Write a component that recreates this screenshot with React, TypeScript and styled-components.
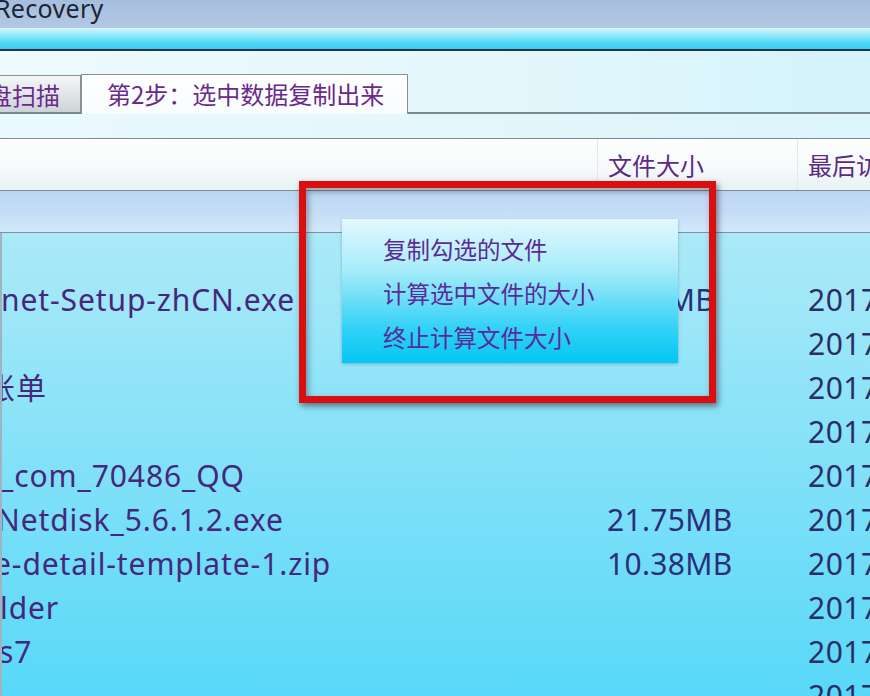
import styled, { createGlobalStyle } from "styled-components";

const GlobalStyle = createGlobalStyle`
  html, body {
    margin: 0;
    padding: 0;
    width: 870px;
    height: 696px;
    overflow: hidden;
    font-family: "Noto Sans", "Noto Sans CJK SC", sans-serif;
  }
`;

const Window = styled.div`
  position: relative;
  width: 870px;
  height: 696px;
  overflow: hidden;
  display: flex;
  flex-direction: column;
  background: linear-gradient(180deg, #c6eff9 0%, #a4e8f8 40%, #58d8f8 100%);
`;

const TitleBar = styled.div`
  height: 28px;
  flex: none;
  display: flex;
  align-items: flex-end;
  background: linear-gradient(180deg, #a6bedd 0%, #b2c8e4 100%);
  overflow: hidden;
`;

const Title = styled.span`
  margin-left: -5px;
  margin-bottom: 7px;
  font-size: 25px;
  line-height: 25px;
  letter-spacing: 0.3px;
  color: #1c2535;
  font-family: "Noto Sans", sans-serif;
`;

const Band = styled.div`
  height: 21px;
  flex: none;
  background: linear-gradient(180deg, #d8f6fc 0%, #9aeaf8 30%, #48d6f6 75%, #3fcaea 100%);
  border-bottom: 2px solid #26334a;
`;

const TabStrip = styled.div`
  height: 63px;
  flex: none;
  display: flex;
  align-items: flex-end;
  background: linear-gradient(90deg, #eefafd 0%, #e2f7fc 60%, #d4f3fb 100%);
  border-bottom: 2px solid #7c8890;
  box-sizing: border-box;
`;

const Tab = styled.div<{ $active?: boolean }>`
  height: ${(p) => (p.$active ? "40px" : "37px")};
  box-sizing: border-box;
  display: flex;
  align-items: center;
  padding: ${(p) => (p.$active ? "0 0 2px 25px" : "0")};
  width: ${(p) => (p.$active ? "327px" : "81px")};
  margin-bottom: ${(p) => (p.$active ? "-2px" : "0")};
  font-size: 24px;
  color: #6a2a8c;
  font-family: "Noto Sans CJK SC", sans-serif;
  border: 1px solid #8a9096;
  border-left: ${(p) => (p.$active ? "1px solid #8a9096" : "none")};
  border-bottom: none;
  background: ${(p) =>
    p.$active
      ? "linear-gradient(180deg, #ffffff 0%, #f7fcfd 100%)"
      : "linear-gradient(180deg, #f4f6f7 0%, #e2e6e9 50%, #ccd2d6 100%)"};
  overflow: hidden;
  white-space: nowrap;
`;

const TabText = styled.span<{ $shift?: number }>`
  margin-left: ${(p) => p.$shift ?? 0}px;
`;

const Gap = styled.div`
  height: 24px;
  flex: none;
  background: linear-gradient(90deg, #eaf9fd 0%, #dcf5fb 100%);
`;

const HeaderRow = styled.div`
  height: 53px;
  flex: none;
  box-sizing: border-box;
  display: grid;
  grid-template-columns: 597px 200px 1fr;
  border-top: 1px solid #7d8a90;
  border-bottom: 1px solid #7d8a90;
  background: linear-gradient(180deg, #fdfefe 0%, #f6fafb 55%, #e8f1f4 100%);
`;

const HeaderCell = styled.div<{ $divider?: boolean }>`
  display: flex;
  align-items: center;
  padding-left: 10px;
  font-size: 24px;
  color: #5c2a84;
  font-family: "Noto Sans CJK SC", sans-serif;
  border-left: ${(p) => (p.$divider ? "1px solid #e2e8ea" : "none")};
  white-space: nowrap;
  overflow: hidden;
`;

const GroupRow = styled.div`
  height: 42px;
  flex: none;
  box-sizing: border-box;
  border-bottom: 1px solid #7e94a4;
  background: linear-gradient(180deg, #bcd6f2 0%, #c4ddf6 50%, #d2e9fa 100%);
`;

const List = styled.div`
  display: flex;
  flex-direction: column;
  padding-top: 1px;
  border-left: 2px solid #9fb4c0;
`;

const Row = styled.div`
  height: 44px;
  flex: none;
  display: grid;
  grid-template-columns: 595px 200px 1fr;
  align-items: center;
  font-size: 30px;
  line-height: 44px;
  white-space: nowrap;
`;

const NameCell = styled.div<{ $shift?: number }>`
  overflow: hidden;
  color: #45287c;
  letter-spacing: 0.9px;
  font-family: "Noto Sans", "Noto Sans CJK SC", sans-serif;
  span {
    display: inline-block;
    margin-left: ${(p) => p.$shift ?? 0}px;
  }
`;

const SizeCell = styled.div`
  padding-left: 10px;
  letter-spacing: 0.3px;
  color: #2d2e78;
`;

const DateCell = styled.div`
  padding-left: 11px;
  letter-spacing: 0.5px;
  color: #2a2f66;
  overflow: hidden;
`;

const Highlight = styled.div`
  position: absolute;
  left: 299px;
  top: 181px;
  width: 417px;
  height: 222px;
  box-sizing: border-box;
  border: 7px solid #d9100f;
  box-shadow: 2px 3px 6px rgba(40, 20, 40, 0.55), inset 2px 3px 6px rgba(40, 40, 60, 0.45);
`;

const Menu = styled.div`
  position: absolute;
  left: 342px;
  top: 219px;
  width: 336px;
  height: 144px;
  box-sizing: border-box;
  padding: 8px 0 0 41px;
  display: flex;
  flex-direction: column;
  background: linear-gradient(180deg, #e2f8fd 0%, #a8ecfa 35%, #34d2f6 75%, #04c6f2 100%);
  box-shadow: 0 1px 3px rgba(40, 80, 110, 0.35);
`;

const MenuItem = styled.div`
  height: 44px;
  line-height: 44px;
  font-size: 23.5px;
  color: #5b2a98;
  font-family: "Noto Sans CJK SC", sans-serif;
  white-space: nowrap;
`;

type FileRow = {
  name: string;
  shift: number;
  size: string;
  date: string;
};

const rows: FileRow[] = [
  { name: "", shift: 0, size: "", date: "" },
  { name: "net-Setup-zhCN.exe", shift: -1, size: "3.24MB", date: "2017" },
  { name: "", shift: 0, size: "", date: "2017" },
  { name: "账单", shift: -17, size: "", date: "2017" },
  { name: "", shift: 0, size: "", date: "2017" },
  { name: "_com_70486_QQ", shift: -2, size: "", date: "2017" },
  { name: "Netdisk_5.6.1.2.exe", shift: -5, size: "21.75MB", date: "2017" },
  { name: "e-detail-template-1.zip", shift: -8, size: "10.38MB", date: "2017" },
  { name: "lder", shift: -2, size: "", date: "2017" },
  { name: "s7", shift: -3, size: "", date: "2017" },
  { name: "", shift: 0, size: "", date: "2017" },
];

const App = () => {
  return (
    <>
      <GlobalStyle />
      <Window>
        <TitleBar>
          <Title>Recovery</Title>
        </TitleBar>
        <Band />
        <TabStrip>
          <Tab>
            <TabText $shift={-36}>磁盘扫描</TabText>
          </Tab>
          <Tab $active>第2步：选中数据复制出来</Tab>
        </TabStrip>
        <Gap />
        <HeaderRow>
          <HeaderCell />
          <HeaderCell $divider>文件大小</HeaderCell>
          <HeaderCell $divider>最后访问时间</HeaderCell>
        </HeaderRow>
        <GroupRow />
        <List>
          {rows.map((r, i) => (
            <Row key={i}>
              <NameCell $shift={r.shift}>
                <span>{r.name}</span>
              </NameCell>
              <SizeCell>{r.size}</SizeCell>
              <DateCell>{r.date}</DateCell>
            </Row>
          ))}
        </List>
        <Highlight />
        <Menu>
          <MenuItem>复制勾选的文件</MenuItem>
          <MenuItem>计算选中文件的大小</MenuItem>
          <MenuItem>终止计算文件大小</MenuItem>
        </Menu>
      </Window>
    </>
  );
};

export default App;
